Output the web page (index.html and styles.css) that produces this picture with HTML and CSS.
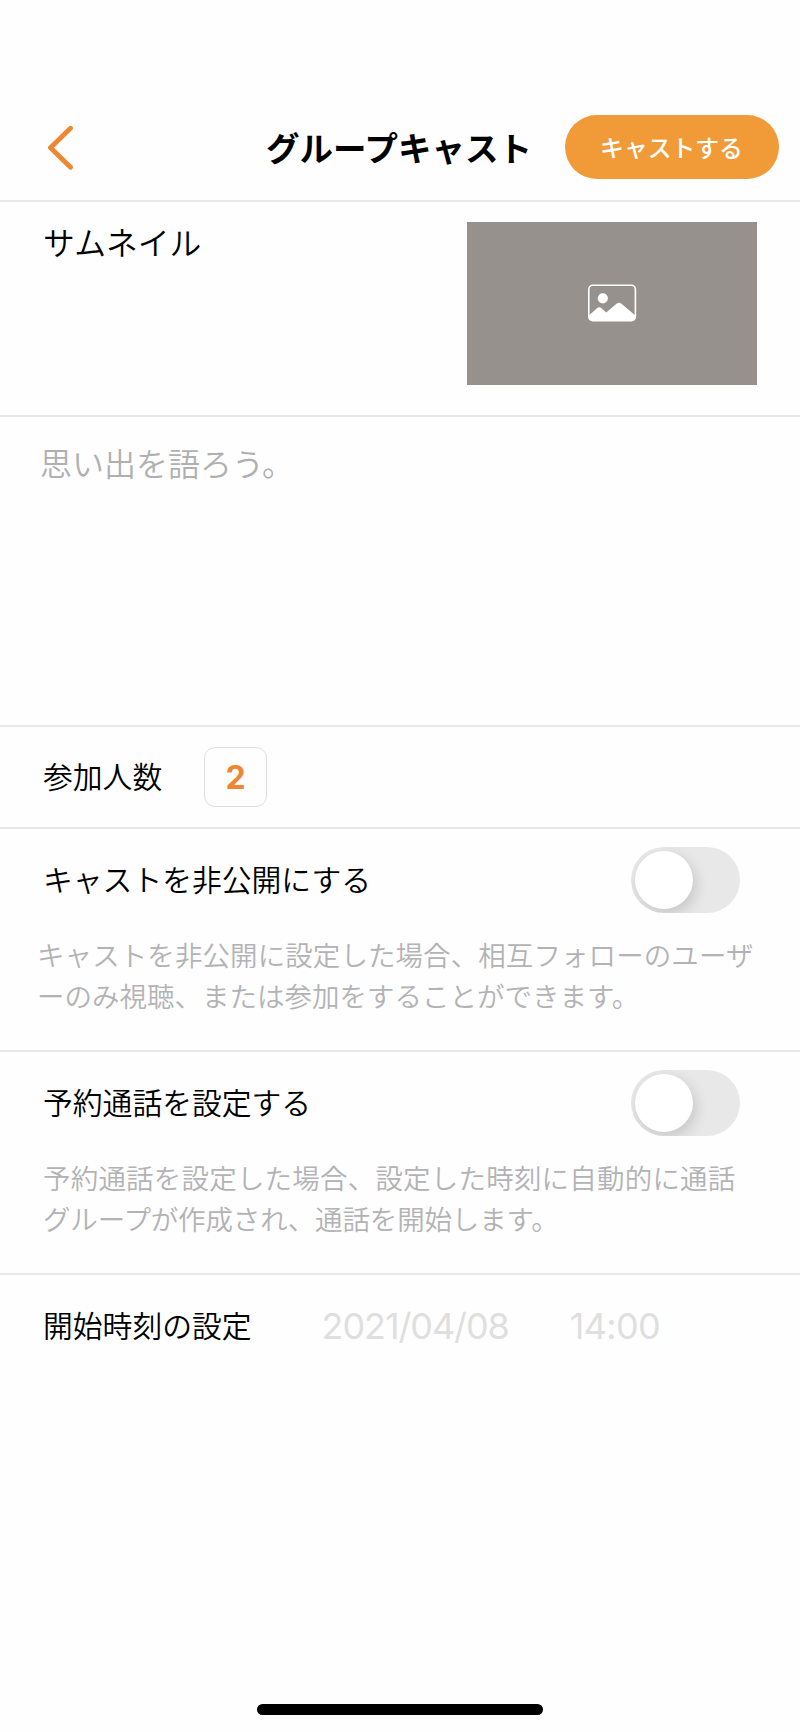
FILE: index.html
```html
<!DOCTYPE html>
<html lang="ja">
<head>
    <meta charset="UTF-8">
    <title>グループキャスト</title>
    <link rel="stylesheet" href="styles.css">
</head>
<body>
    <div class="screen">
        <header class="header">
            <a class="back">
                <svg width="26" height="46" viewBox="0 0 26 46">
                    <path d="M23.5 4.2L3.5 23.7L23.5 43.2" fill="none" stroke="#ef8632" stroke-width="4.8" stroke-linecap="round" stroke-linejoin="round"/>
                </svg>
            </a>
            <h1 class="title">グループキャスト</h1>
            <button class="cast-btn">キャストする</button>
        </header>

        <section class="row thumbnail">
            <span class="label label-large">サムネイル</span>
            <div class="thumb-box">
                <svg width="50" height="38" viewBox="0 0 50 38">
                    <rect x="1.8" y="1.3" width="46.6" height="35.4" rx="4" fill="none" stroke="#fff" stroke-width="1.6"/>
                    <circle cx="15.8" cy="14.3" r="5.1" fill="#fff"/>
                    <path d="M1.8 31.5L10 24.3Q12.3 22.3 14.5 24.3L19.2 28.6L29.5 19.7Q32 17.6 34.5 19.7L48.4 31.5V33Q48.4 37 44.5 37H5.8Q1.8 37 1.8 33Z" fill="#fff"/>
                </svg>
            </div>
        </section>

        <section class="row comment">
            <p class="placeholder">思い出を語ろう。</p>
        </section>

        <section class="row members">
            <span class="label">参加人数</span>
            <div class="count">2</div>
        </section>

        <section class="row setting">
            <div class="setting-head">
                <span class="label">キャストを非公開にする</span>
                <div class="toggle"><div class="knob"></div></div>
            </div>
            <p class="desc desc-private">キャストを非公開に設定した場合、相互フォローのユーザ<br>ーのみ視聴、または参加をすることができます。</p>
        </section>

        <section class="row setting">
            <div class="setting-head">
                <span class="label">予約通話を設定する</span>
                <div class="toggle"><div class="knob"></div></div>
            </div>
            <p class="desc desc-reserve">予約通話を設定した場合、設定した時刻に自動的に通話<br>グループが作成され、通話を開始します。</p>
        </section>

        <section class="start-time">
            <span class="label">開始時刻の設定</span>
            <span class="date">2021/04/08</span>
            <span class="time">14:00</span>
        </section>

        <div class="home-bar"></div>
    </div>
</body>
</html>
```

FILE: styles.css
```css
* {
    box-sizing: border-box;
}
body {
    margin: 0;
    background-color: #fefefe;
    font-family: "Noto Sans CJK JP", sans-serif;
    font-weight: 350;
    color: #000;
}
.screen {
    width: 800px;
    height: 1732px;
    display: flex;
    flex-direction: column;
}
.header {
    height: 202px;
    padding: 94px 21px 0 47px;
    display: flex;
    align-items: center;
    border-bottom: 2px solid #e8e8e8;
}
.back {
    display: flex;
    width: 219px;
}
.title {
    margin: 0;
    font-size: 33.5px;
    line-height: 48px;
    font-weight: bold;
    white-space: nowrap;
}
.cast-btn {
    width: 214px;
    height: 64px;
    margin-left: auto;
    padding: 0 1px 2px 0;
    border: none;
    border-radius: 32px;
    background-color: #f09b38;
    color: #fff;
    font-family: inherit;
    font-size: 23.8px;
    font-weight: 500;
}
.row {
    border-bottom: 2px solid #e8e8e8;
}
.label {
    padding-bottom: 4px;
    font-size: 29.8px;
    line-height: 44px;
    white-space: nowrap;
}
.label-large {
    font-size: 31.8px;
    line-height: 38px;
}
.thumbnail {
    height: 215px;
    padding: 20px 43px 0 43px;
    display: flex;
    justify-content: space-between;
}
.thumb-box {
    width: 290px;
    height: 163px;
    padding-bottom: 2px;
    display: flex;
    justify-content: center;
    align-items: center;
    background-color: #96918d;
}
.comment {
    height: 310px;
    padding: 22px 40px;
}
.placeholder {
    margin: 0;
    font-size: 32px;
    line-height: 46px;
    color: #b0b0b0;
}
.members {
    height: 102px;
    padding-left: 43px;
    display: flex;
    align-items: center;
    gap: 42px;
}
.count {
    width: 63px;
    height: 60px;
    border: 1px solid #dedede;
    border-radius: 11px;
    color: #ef8632;
    font-family: Inter, sans-serif;
    font-size: 32px;
    line-height: 60px;
    font-weight: bold;
    text-align: center;
}
.setting {
    height: 223px;
    padding: 18px 0 0 43px;
}
.setting-head {
    height: 66px;
    padding-right: 60px;
    display: flex;
    justify-content: space-between;
    align-items: center;
}
.toggle {
    width: 109px;
    height: 66px;
    padding: 4px;
    border-radius: 33px;
    background-color: #e8e8e8;
    overflow: hidden;
}
.knob {
    width: 58px;
    height: 58px;
    border-radius: 50%;
    background-color: #fff;
    box-shadow: 3px 5px 14px rgba(0, 0, 0, 0.15);
}
.desc {
    margin: 21px 0 0;
    font-size: 27.5px;
    line-height: 41px;
    color: #b3b3b5;
    white-space: nowrap;
}
.desc-private {
    margin-left: -6px;
}
.desc-private::first-line {
    letter-spacing: 0.08px;
}
.desc-reserve {
    letter-spacing: -0.15px;
}
.desc-reserve::first-line {
    letter-spacing: 0.2px;
}
.start-time {
    height: 102px;
    padding-left: 43px;
    display: flex;
    align-items: center;
}
.date,
.time {
    font-family: Inter, sans-serif;
    font-size: 36px;
    font-weight: 400;
    letter-spacing: -1.1px;
    color: #dfdfdf;
}
.date {
    margin-left: 70px;
}
.time {
    margin-left: 61px;
    letter-spacing: -0.7px;
}
.home-bar {
    width: 286px;
    height: 11px;
    margin: auto auto 17px;
    border-radius: 6px;
    background-color: #000;
}
```
